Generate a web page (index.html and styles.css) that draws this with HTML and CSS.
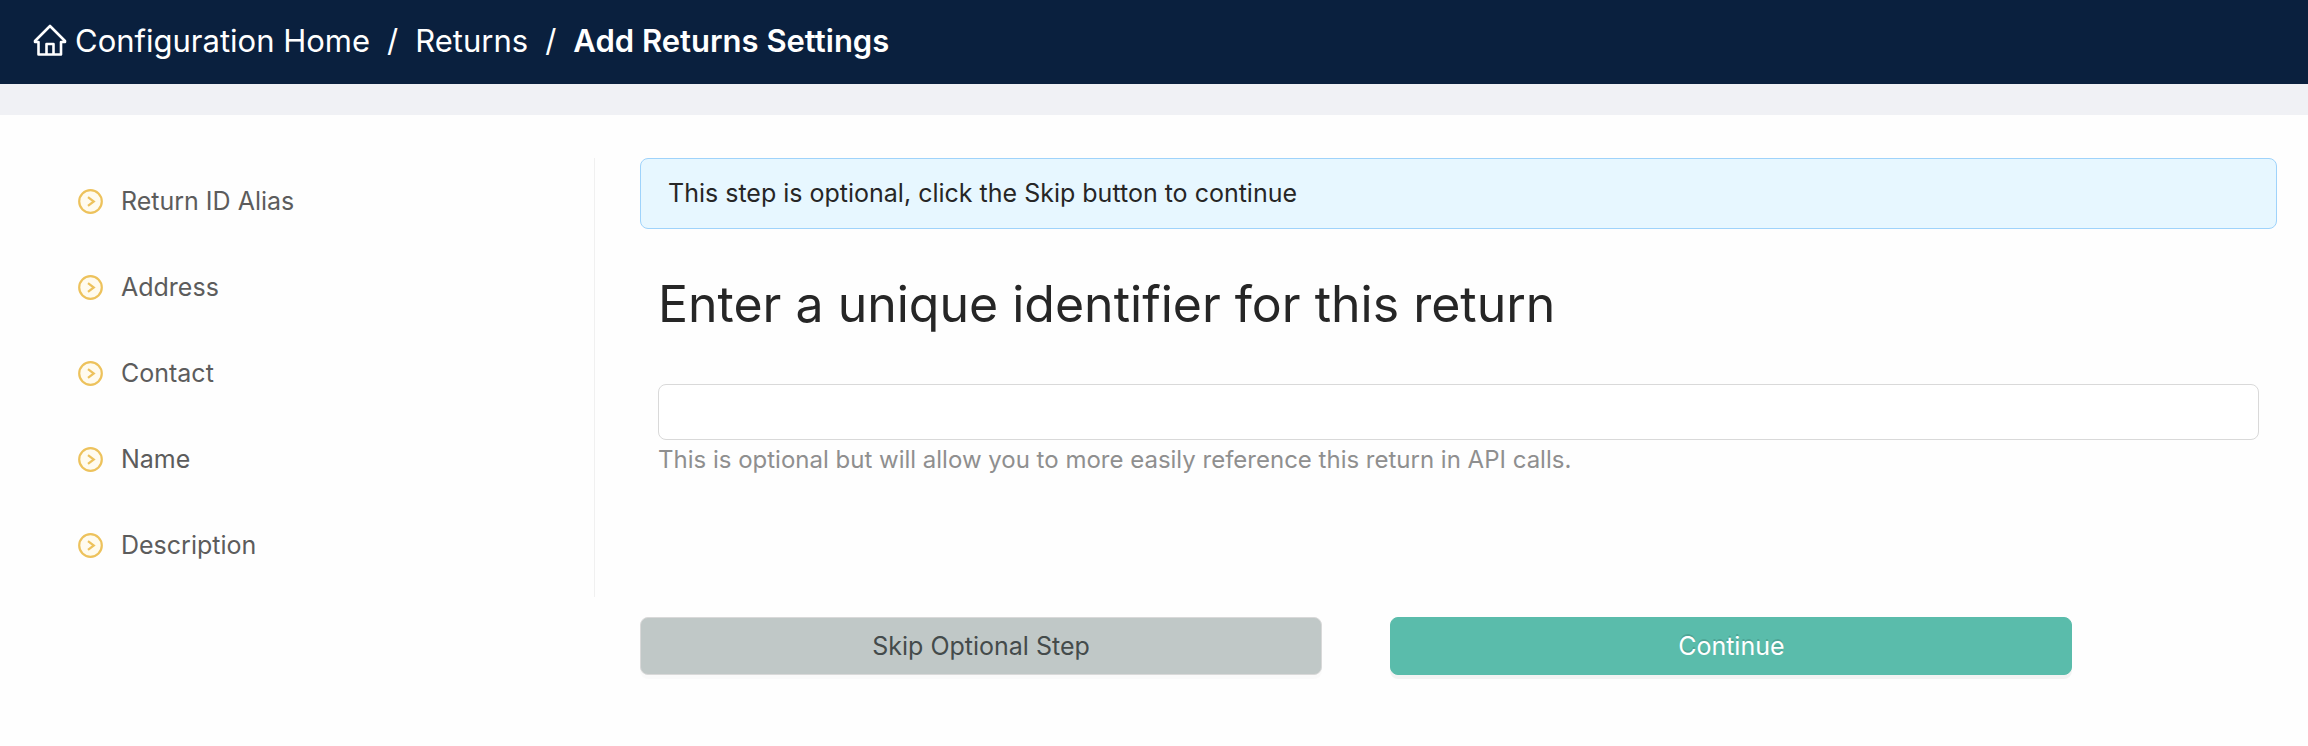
FILE: index.html
```html
<!DOCTYPE html>
<html lang="en">
  <head>
    <meta charset="UTF-8" />
    <meta name="viewport" content="width=device-width, initial-scale=1.0" />
    <title>Add Returns Settings</title>
    <link rel="stylesheet" href="styles.css">
  </head>
  <body>
    <header>
      <nav class="breadcrumb" aria-label="Breadcrumb">
        <a href="#" class="home">
          <svg class="home-icon" viewBox="0 0 34 32" aria-hidden="true">
            <path d="M17 2 L32 17 V18 H28 V30.500 H5.500 V18 H2 V17 Z" />
            <path d="M13.500 30 V20 H20.500 V30" />
          </svg>
          <span>Configuration Home</span>
        </a>
        <span class="slash">/</span>
        <a href="#">Returns</a>
        <span class="slash">/</span>
        <strong>Add Returns Settings</strong>
      </nav>
    </header>
    <div class="page">
      <ul class="steps">
        <li>
          <svg class="step-icon" viewBox="0 0 25 25" aria-hidden="true">
            <circle cx="12.5" cy="12.5" r="11.3" />
            <path d="M10 8.200 L15.800 12.500 L10 16.800" />
          </svg>
          Return ID Alias
        </li>
        <li>
          <svg class="step-icon" viewBox="0 0 25 25" aria-hidden="true">
            <circle cx="12.5" cy="12.5" r="11.3" />
            <path d="M10 8.200 L15.800 12.500 L10 16.800" />
          </svg>
          Address
        </li>
        <li>
          <svg class="step-icon" viewBox="0 0 25 25" aria-hidden="true">
            <circle cx="12.5" cy="12.5" r="11.3" />
            <path d="M10 8.200 L15.800 12.500 L10 16.800" />
          </svg>
          Contact
        </li>
        <li>
          <svg class="step-icon" viewBox="0 0 25 25" aria-hidden="true">
            <circle cx="12.5" cy="12.5" r="11.3" />
            <path d="M10 8.200 L15.800 12.500 L10 16.800" />
          </svg>
          Name
        </li>
        <li>
          <svg class="step-icon" viewBox="0 0 25 25" aria-hidden="true">
            <circle cx="12.5" cy="12.5" r="11.3" />
            <path d="M10 8.200 L15.800 12.500 L10 16.800" />
          </svg>
          Description
        </li>
      </ul>
      <main>
        <div class="alert">This step is optional, click the Skip button to continue</div>
        <form id="alias-form" class="field">
          <h1><label for="alias">Enter a unique identifier for this return</label></h1>
          <input type="text" id="alias" aria-describedby="alias-help" />
          <p id="alias-help" class="help">This is optional but will allow you to more easily reference this return in API calls.</p>
        </form>
        <div class="actions">
          <button type="button" class="skip">Skip Optional Step</button>
          <button type="submit" form="alias-form" class="continue">Continue</button>
        </div>
      </main>
    </div>
  </body>
</html>
```

FILE: styles.css
```css
* {
  box-sizing: border-box;
}
body {
  margin: 0;
  background-color: #fefefe;
  color: #262626;
  font-family: Inter, "Liberation Sans", sans-serif;
  font-size: 25px;
  line-height: 39px;
}
header {
  background-color: #0a203e;
  border-bottom: 31px solid #f0f1f5;
}
.breadcrumb {
  display: flex;
  align-items: center;
  height: 84px;
  padding: 0 33px 4px;
  color: white;
  font-size: 31px;
}
.breadcrumb a {
  color: white;
  text-decoration: none;
}
.breadcrumb .home {
  display: flex;
  align-items: center;
  gap: 8px;
}
.breadcrumb .slash {
  margin: 0 17px;
}
.breadcrumb strong {
  font-weight: 600;
}
.home-icon {
  width: 34px;
  height: 32px;
  fill: none;
  stroke: white;
  stroke-width: 2.6;
  stroke-linejoin: round;
}
.page {
  display: flex;
  align-items: flex-start;
  padding: 43px 31px 32px 33px;
}
.steps {
  box-sizing: content-box;
  flex: 0 0 25%;
  margin: 0;
  padding: 0 0 9px;
  border-right: 1px solid #f0f0f0;
  list-style: none;
  color: #5c5c5c;
}
.steps li {
  display: flex;
  align-items: center;
  gap: 18px;
  height: 86px;
  padding-left: 45px;
}
.step-icon {
  width: 25px;
  height: 25px;
  fill: #fffbee;
  stroke: #edc25c;
  stroke-width: 2.2;
}
.step-icon path {
  fill: none;
}
main {
  flex: 1;
  padding-left: 45px;
}
.alert {
  padding: 15px 27px;
  border: 1px solid #9fd3fb;
  border-radius: 8px;
  background-color: #e7f7ff;
}
.field {
  padding: 0 18px;
}
h1 {
  margin: 43px 0 48px;
  font-size: 50px;
  font-weight: normal;
  line-height: 64px;
}
input {
  display: block;
  width: 100%;
  height: 56px;
  padding: 0 22px;
  border: 1px solid #d9d9d9;
  border-radius: 8px;
  background-color: white;
  font: inherit;
}
.help {
  margin: 0;
  color: #8f8f8f;
  font-size: 24px;
}
/* two ten-part buttons, one part between them and three left over */
.actions {
  display: grid;
  grid-template-columns: 10fr 1fr 10fr 3fr;
  margin-top: 138px;
}
button {
  height: 58px;
  border: 1px solid #d9d9d9;
  border-radius: 8px;
  font: inherit;
}
.skip {
  background-color: #c0c8c7;
  box-shadow: 0 4px 0 rgba(0, 0, 0, 0.015);
  color: #444b4b;
}
.continue {
  grid-column: 3;
  border-color: #5abcab;
  background-color: #5abcab;
  box-shadow: 0 4px 0 rgba(0, 0, 0, 0.045);
  color: white;
  text-shadow: 0 -2px 0 rgba(0, 0, 0, 0.12);
}
```
